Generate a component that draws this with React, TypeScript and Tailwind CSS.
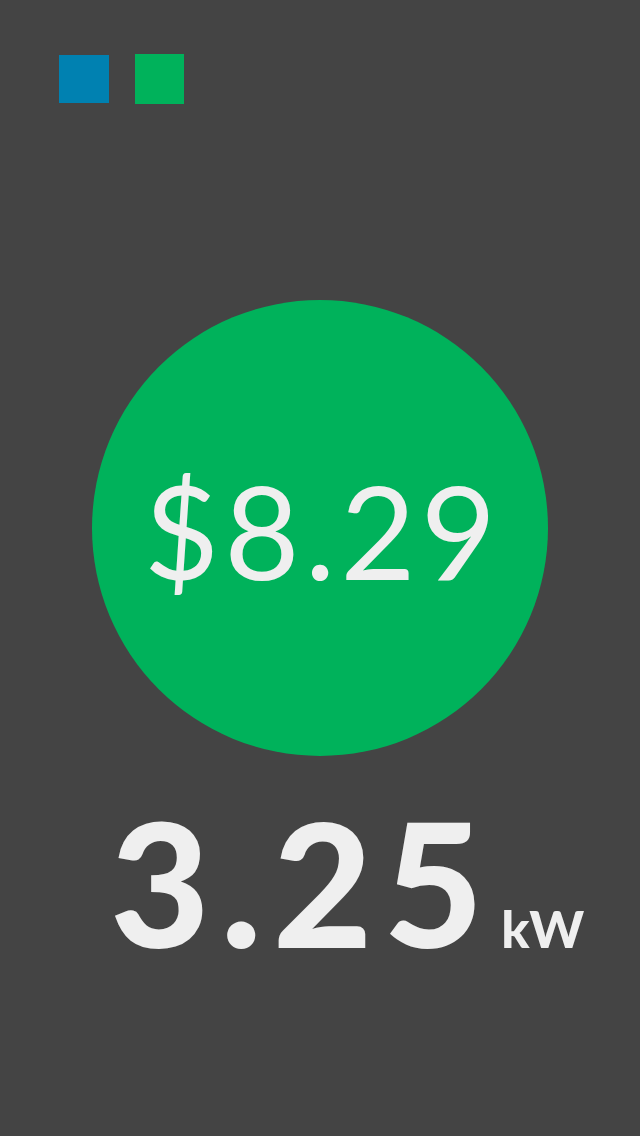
export default function App() {
  return (
    <div
      className="flex min-h-[1136px] w-full flex-col bg-[#444444] text-[#efefef]"
      style={{ fontFamily: "Lato, 'Open Sans', sans-serif" }}
    >
      {/* Legend squares */}
      <div className="flex items-center gap-[26px] pl-[59px] pt-[54px]">
        <div className="h-[48px] w-[50px] bg-[#0081b1]" />
        <div className="h-[50px] w-[49px] bg-[#00b25b]" />
      </div>

      {/* Cost circle */}
      <div className="mt-[196px] flex justify-center">
        <div className="flex h-[456px] w-[456px] items-center justify-center rounded-full bg-[#00b25b] pl-[5px] pt-[4px]">
          <span className="text-[130px] font-normal leading-none tracking-[5px]">$8.29</span>
        </div>
      </div>

      {/* Power reading */}
      <div className="mt-[40px] flex items-baseline pl-[110px]">
        <span className="text-[172px] font-black leading-none tracking-[11px]">3.25</span>
        <span className="ml-[7px] text-[52px] font-black leading-none tracking-[1px]">kW</span>
      </div>
    </div>
  );
}
